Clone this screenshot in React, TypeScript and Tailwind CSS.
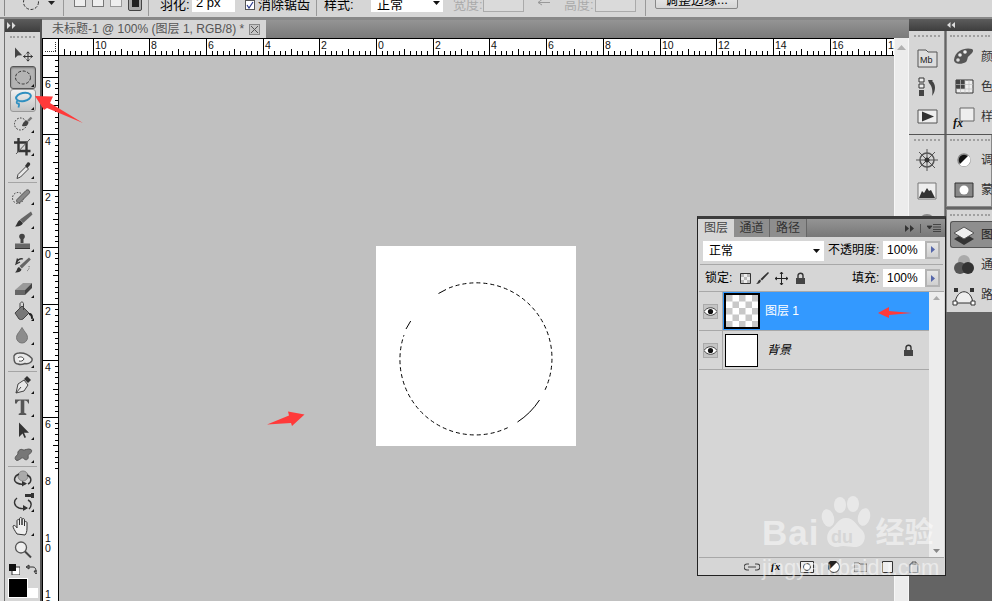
import React from "react";

const cjk = "font-['Liberation_Sans','Noto_Sans_CJK_SC',sans-serif]";

function Corner() {
  return <path d="M23 21h3v-3z" fill="#111" />;
}

const tools: Record<string, React.ReactNode> = {
  move: (
    <>
      <path d="M7 5.500v10.500l2.800-2.600 4.400-.2z" fill="#444" />
      <path d="M20 10v9M15.500 14.500h9M18.500 11.500l1.500-1.700 1.500 1.700M18.500 17.500l1.500 1.700 1.500-1.700M17.500 13l-2 1.500 2 1.500M22.500 13l2 1.500-2 1.500" stroke="#333" fill="none" />
    </>
  ),
  marquee: (
    <>
      <ellipse cx="15" cy="11.500" rx="7.500" ry="6.500" fill="none" stroke="#333" strokeDasharray="3 1.600" />
      <Corner />
    </>
  ),
  lasso: (
    <>
      <ellipse cx="15.500" cy="8" rx="7.500" ry="4" fill="none" stroke="#2f8fc0" strokeWidth="2" transform="rotate(-12 15.500 8)" />
      <path d="M9.500 12c-2 2 0 3 1.300 2.500.8 1.500 0 3-.4 4" fill="none" stroke="#2f8fc0" strokeWidth="1.800" />
      <Corner />
    </>
  ),
  quick: (
    <>
      <circle cx="12.500" cy="12" r="6" fill="none" stroke="#333" strokeDasharray="1.600 1.400" />
      <path d="M14 14c1-4 3-5.500 5-5.500l1.500 2c-.3 2.500-2.500 4.500-6.500 3.500z" fill="#444" />
      <path d="M20 9l3.500-3.500" stroke="#777" strokeWidth="2.400" />
      <Corner />
    </>
  ),
  crop: (
    <>
      <path d="M10.500 3v13h12M6 7.500h12.500v13" fill="none" stroke="#333" strokeWidth="2.400" />
      <path d="M8 19l14-15" stroke="#555" strokeWidth="1" />
      <Corner />
    </>
  ),
  dropper: (
    <>
      <path d="M10 16.500l8-8 2.500 2.500-8 8-3.500 1.500z" fill="#e8e8e8" stroke="#444" />
      <path d="M17 8l2.500-3.500c1.500-1 3.500 1 2.500 2.500L19.500 10z" fill="#333" />
      <Corner />
    </>
  ),
  heal: (
    <>
      <circle cx="10" cy="14" r="5.500" fill="none" stroke="#333" strokeDasharray="1.500 1.500" />
      <path d="M9 15.500l9-9c2-2 5 1 3 3l-9 9c-2 1-4.500-1-3-3z" fill="#888" stroke="#555" />
      <Corner />
    </>
  ),
  brush: (
    <>
      <path d="M7 18.500c4 .5 7-1 8-3.500l-3-3c-3 1-2.500 4.500-5 6.500z" fill="#333" />
      <path d="M12 11.500l3.200 3.500L24.500 6.500 23 3.500z" fill="#666" />
      <Corner />
    </>
  ),
  stamp: (
    <>
      <circle cx="14" cy="5.500" r="2.800" fill="#444" />
      <path d="M12.500 7h3v5h-3z" fill="#444" />
      <path d="M7 12.500h15v4H7z" fill="#666" />
      <path d="M7 16.500h15v1.500H7z" fill="#333" />
      <Corner />
    </>
  ),
  history: (
    <>
      <path d="M7 18.500c3 .5 6-1 6.500-3l-2.500-2.500c-2.500 1-1.500 3.500-4 5.500z" fill="#333" />
      <path d="M11.500 12l2.300 2.500 9-9-1.800-2z" fill="#666" />
      <path d="M8 10c1-4 4-6 7-5M9.500 4.500l-1.500 5.500 4-2" fill="none" stroke="#333" strokeWidth="1.300" />
      <path d="M21 12c.6 2-.4 4-2 5" fill="none" stroke="#666" strokeDasharray="1.200 1.200" />
    </>
  ),
  eraser: (
    <>
      <path d="M7 13l8-7h9l-7 7z" fill="#999" />
      <path d="M7 13h10v5H7z" fill="#666" />
      <path d="M17 13l7-7v5l-7 7z" fill="#444" />
      <Corner />
    </>
  ),
  bucket: (
    <>
      <path d="M7 13l7-7 7 7-6 6c-2 1-3 .5-4 0z" fill="#777" stroke="#444" />
      <path d="M12 8V3.500c1-2 3-2 3.500 0V10" fill="none" stroke="#444" />
      <path d="M21 13c3 0 4 2 4 5 0 1.500-2 1.500-2 0 0-2-1-3-2-3z" fill="#222" />
      <Corner />
    </>
  ),
  blur: (
    <>
      <path d="M14 3.500c2 4 5.500 6.500 5.500 10a5.500 5.500 0 0 1-11 0c0-3.500 3.500-6 5.500-10z" fill="#8c8c8c" stroke="#777" />
      <Corner />
    </>
  ),
  smudge: (
    <>
      <path d="M6 11c-.8-3 2-5 5-5 6-.5 10 2 13 5.500 1 3-3 6-7 5-2.500 1-4.500 1.500-7 .5-3 0-4-3-4-6z" fill="#e8e8e8" stroke="#555" strokeWidth="1.400" />
      <path d="M10 11c2-2 5-1 6 1-1 2-3 2.500-5 2" fill="#fff" stroke="#444" />
      <Corner />
    </>
  ),
  pen: (
    <>
      <path d="M8 20l2-9 6-4 4 5-4 6z" fill="#e8e8e8" stroke="#444" />
      <path d="M8 20l5-6" stroke="#444" />
      <path d="M16 6l3-3 4 4-3 3z" fill="#333" />
      <Corner />
    </>
  ),
  type: (
    <>
      <path d="M7 3.500h14v4h-.8c-.5-2-1.500-3-3.900-3v12.300l2 .9V19h-7.600v-1.300l2-.9V4.500c-2.400 0-3.400 1-3.900 3H7z" fill="#555" />
      <Corner />
    </>
  ),
  path: (
    <>
      <path d="M11 3.500V18l3.500-3.500 2 4.500 1.500-.7-2-4.500H21z" fill="#333" />
      <Corner />
    </>
  ),
  shape: (
    <>
      <path d="M8 18c-2-2 0-4 2-6-1-3 3-6 5-4 2 .5 5-2 8-.5 2 2-1 4-3 6 1 3-1 5-3 4-2-2-3-2-4-1-2 1.500-4 2.500-5 1.500z" fill="#777" stroke="#555" />
      <Corner />
    </>
  ),
  rot3d: (
    <>
      <circle cx="15" cy="8" r="5" fill="#aaa" stroke="#888" />
      <path d="M11 6C6 8 5 13 9 15c3 1.500 6 1.500 8.500.5M19 7c5 2 5 7 1 9" fill="none" stroke="#333" strokeWidth="1.400" />
      <path d="M14 13l5 2.500-5 3z" fill="#333" />
      <Corner />
    </>
  ),
  orbit3d: (
    <>
      <path d="M9 7c-4 3-3 8 2 10 3 1 5 1 8 0M20 9c4 2 4 6 1 9" fill="none" stroke="#333" strokeWidth="1.400" />
      <path d="M15 14l5 3-5 3z" fill="#333" />
      <path d="M17 3h6v3h-6zM23 2h3v5h-3z" fill="#333" />
      <Corner />
    </>
  ),
  hand: (
    <>
      <path d="M9 19c-2-3-4-6-4-8 1-1.500 3 0 4 2V6c0-2 2.500-2 2.500 0v4V4c0-2 2.500-2 2.500 0v6-5c0-2 2.500-2 2.500 0v6-3c0-2 2.500-2 2.500 0v5c0 4-1 6-2 7z" fill="#eee" stroke="#333" />
      <Corner />
    </>
  ),
  zoom: (
    <>
      <circle cx="13" cy="9.500" r="5.500" fill="#efefef" stroke="#555" strokeWidth="1.300" />
      <path d="M17 13.500l6 6" stroke="#444" strokeWidth="2" />
    </>
  ),
};

function Tool({ name, variant }: { name: string; variant?: "dark" | "light" }) {
  const box =
    variant === "dark"
      ? "bg-[#b4b4b4] border border-[#555] rounded-[3px] shadow-[inset_0_1px_2px_#777]"
      : variant === "light"
        ? "bg-gradient-to-b from-[#f0f0f0] to-[#c4c4c4] border border-[#999] rounded-[3px]"
        : "";
  return (
    <div className="h-[23.2px] flex items-center justify-center">
      <div className={`w-[26px] h-[23px] flex items-center justify-center shrink-0 ${box}`}>
        <svg width="30" height="23" viewBox="0 0 30 23" className="shrink-0">
          {tools[name]}
        </svg>
      </div>
    </div>
  );
}

function Sep() {
  return (
    <div className="h-[2.800px] flex items-center px-[3px]">
      <div className="h-px w-full bg-[#a5a5a5]" />
    </div>
  );
}

function Grip({ className = "" }: { className?: string }) {
  return <div className={`h-[2px] border-t-2 border-dotted border-[#a0a0a0] ${className}`} />;
}

function Toolbar() {
  return (
    <div className="w-[42px] shrink-0 flex bg-[#d6d6d6]">
      <div className="w-[5px] shrink-0 bg-[#dadada] border-r border-[#707070]" />
      <div className="flex-1 border-r-2 border-[#555] flex flex-col relative">
        <div className="h-[13px] shrink-0 bg-gradient-to-b from-[#5c5c5c] to-[#3e3e3e] flex items-center pl-[2px] text-[#ddd]">
          <svg width="9" height="7" viewBox="0 0 9 7"><path d="M0 0l3.500 3.500L0 7zM5 0l3.500 3.500L5 7z" fill="#ddd" /></svg>
        </div>
        <div className="h-[10.400px] shrink-0 flex items-center px-[5px]">
          <Grip className="w-full" />
        </div>
        <Tool name="move" />
        <Tool name="marquee" variant="dark" />
        <Tool name="lasso" variant="light" />
        <Tool name="quick" />
        <Tool name="crop" />
        <Tool name="dropper" />
        <Sep />
        <Tool name="heal" />
        <Tool name="brush" />
        <Tool name="stamp" />
        <Tool name="history" />
        <Tool name="eraser" />
        <Tool name="bucket" />
        <Tool name="blur" />
        <Tool name="smudge" />
        <Sep />
        <Tool name="pen" />
        <Tool name="type" />
        <Tool name="path" />
        <Tool name="shape" />
        <Sep />
        <Tool name="rot3d" />
        <Tool name="orbit3d" />
        <Tool name="hand" />
        <Tool name="zoom" />
        <div className="flex items-center gap-[6px] pl-[4px] h-[16px] mt-[1px] shrink-0">
          <svg width="11" height="11" viewBox="0 0 11 11"><path d="M3 3h8v8H3z" fill="#fff" stroke="#333" /><path d="M0 0h7v7H0z" fill="#111" /></svg>
          <svg width="11" height="11" viewBox="0 0 11 11"><path d="M1 3h6c2 0 3 1.500 3 5M0 3l3-2v4zM10 10L8 7h4z" fill="none" stroke="#333" /></svg>
        </div>
        <div className="flex items-end pl-[3px]">
          <div className="w-[20px] h-[20px] bg-black border border-white shrink-0" />
          <div className="w-[10px] h-[10px] bg-white shrink-0" />
        </div>
      </div>
    </div>
  );
}

function HRuler() {
  const ticks: React.ReactNode[] = [];
  for (let i = 0; i < 150; i++) {
    const x = 376 - 42 - 56.7 * 5 - 5.67 * 5 + i * 5.67;
    if (x < 17 || x > 851) continue;
    const x0 = Math.round(x) + 0.5;
    const major = (i - 5) % 10 === 0;
    const mid = i % 10 === 0;
    ticks.push(<path key={i} d={`M${x0} ${major ? 0 : mid ? 11 : 13}V17`} stroke="#000" fill="none" />);
  }
  const labels = [10, 8, 6, 4, 2, 0, 2, 4, 6, 8, 10, 12, 14, 16, 18];
  return (
    <div className="h-[18px] shrink-0 bg-white">
      <svg width="852" height="18" viewBox="0 0 852 18" className="block">
        <path d="M0 .5H852M0 17.500H852M.5 0V18" stroke="#000" fill="none" />
        <path d="M16.500 0V18" stroke="#000" fill="none" />
        <path d="M3 13.500h12M13.500 4v9" stroke="#333" strokeDasharray="1 1" fill="none" />
        {ticks}
        {labels.map((l, k) => (
          <text key={k} x={Math.round(376 - 42 - 283.5 + k * 56.7) + 2} y="11" fontSize="10.500" fontFamily="Liberation Sans" fill="#111">
            {l}
          </text>
        ))}
      </svg>
    </div>
  );
}

function VRuler() {
  const ticks: React.ReactNode[] = [];
  for (let i = -6; i < 70; i++) {
    const y = 246 - 55 - 56.7 * 3 + i * 5.67;
    if (y < 0 || y > 546) continue;
    const y0 = Math.round(y) + 0.5;
    const major = ((i % 10) + 10) % 10 === 0;
    const mid = ((i % 10) + 10) % 10 === 5;
    ticks.push(<path key={i} d={`M${major ? 0 : mid ? 11 : 13} ${y0}H17`} stroke="#000" fill="none" />);
  }
  const labels = ["6", "4", "2", "0", "2", "4", "6", "8", "10", "12"];
  return (
    <div className="w-[17px] shrink-0 bg-white">
      <svg width="17" height="546" viewBox="0 0 17 546" className="block">
        <path d="M.5 0V546M16.500 0V546" stroke="#000" fill="none" />
        {ticks}
        {labels.map((l, k) => {
          const y = Math.round(246 - 55 - 56.7 * 3 + k * 56.7);
          return (
            <text key={k} x="3" y={y + 11} fontSize="10.500" fontFamily="Liberation Sans" fill="#111">
              {l[0]}
              {l[1] ? <tspan x="3" dy="10">{l[1]}</tspan> : null}
            </text>
          );
        })}
      </svg>
    </div>
  );
}

function Selection() {
  return (
    <svg width="200" height="200" viewBox="0 0 200 200" className="block">
      <g fill="none" stroke="#000" strokeWidth="1">
        <path d="M62.500 47.500L70 43.500M30 83L34.700 75M163.500 154A75.500 75.500 0 0 1 141.500 176" />
        <path d="M73 42A75.500 75.500 0 0 1 169 144" strokeDasharray="4 3" />
        <path d="M131.700 181.700A75.500 75.500 0 0 1 28 89" strokeDasharray="4 3" />
      </g>
    </svg>
  );
}

function Scrollbar() {
  return (
    <div className="w-[15px] shrink-0 bg-[#ececec] border-x border-[#f6f6f6] flex justify-center pt-[7px]">
      <svg width="9" height="5" viewBox="0 0 9 5"><path d="M0 5L4.500 0 9 5z" fill="#b0b0b0" /></svg>
    </div>
  );
}

function Center() {
  return (
    <div className="flex-1 min-w-0 flex flex-col">
      <div className="h-[19px] shrink-0 flex bg-gradient-to-b from-[#949494] to-[#7a7a7a] border-t border-[#888]">
        <div className={`w-[224px] h-[18px] bg-[#d6d6d6] flex items-center pl-[10px] text-[12px] text-[#555] whitespace-nowrap ${cjk}`}>
          <span className="w-[197px] shrink-0">未标题-1 @ 100% (图层 1, RGB/8) *</span>
          <span className="w-[11px] h-[11px] shrink-0 bg-[#c4c4c4] border border-[#888] flex items-center justify-center">
            <svg width="7" height="7" viewBox="0 0 7 7"><path d="M0 0l7 7M7 0L0 7" stroke="#555" /></svg>
          </span>
        </div>
      </div>
      <div className="flex-1 flex min-h-0">
        <div className="w-[852px] shrink-0 flex flex-col">
          <HRuler />
          <div className="flex-1 flex min-h-0">
            <VRuler />
            <div className="flex-1 bg-[#c0c0c0] overflow-hidden">
              <div className="ml-[317px] mt-[190px] w-[200px] h-[200px] bg-white">
                <Selection />
              </div>
            </div>
          </div>
        </div>
        <Scrollbar />
      </div>
    </div>
  );
}

const dockIcons: Record<string, React.ReactNode> = {
  mb: (<><path d="M3 5h8l2 2h9v15H3z" fill="#ddd" stroke="#555" /><text x="5" y="18" fontSize="9" fontFamily="Liberation Sans" fill="#222">Mb</text></>),
  hist: (<><path d="M4 3h5v4H4zM4 9h5v4H4z" fill="#eee" stroke="#333" /><path d="M4 15h5v6H4z" fill="#444" /><path d="M13 5h5l-1 1c4 3 4 10 0 15 1-5 0-10-3-13z" fill="#444" /></>),
  play: (<><path d="M3 5h19v13H3z" fill="#eee" stroke="#555" /><path d="M7 6.500l12 5-12 5z" fill="#333" /></>),
  wheel: (<><circle cx="12" cy="12" r="7" fill="none" stroke="#555" strokeWidth="1.500" /><path d="M12 1v22M1 12h22M4 4l16 16M20 4L4 20" stroke="#555" /><circle cx="12" cy="12" r="2.500" fill="#333" /></>),
  histo: (<><path d="M3 5h18v16H3z" fill="#eee" stroke="#777" /><path d="M4 20l3-7 2 2 3-5 2 3 2-1 4 8z" fill="#333" /></>),
  ball: (<><circle cx="12" cy="14" r="8" fill="#888" /><circle cx="10" cy="11" r="3" fill="#ddd" /></>),
  palette: (<><path d="M2 15C3 5 14 2 20 4c3 2-1 5-3 7-2 1-1 4-3 6-5 3-12 2-12-2z" fill="#555" /><circle cx="8" cy="10" r="1.800" fill="#eee" /><circle cx="13" cy="7" r="1.800" fill="#eee" /><circle cx="6" cy="15" r="1.800" fill="#ddd" /></>),
  grid: (<><path d="M4 5h17v13H4z" fill="#eee" stroke="#333" /><path d="M4 5h9v9H4z" fill="#444" /><path d="M8.500 5v13M13 5v13M17 5v13M4 9.500h17M4 14h17" stroke="#bbb" strokeWidth=".7" /></>),
  fx: (<><path d="M8 3h14v13H8z" fill="#eee" stroke="#666" /><text x="1" y="22" fontSize="12" fontStyle="italic" fontWeight="bold" fontFamily="Liberation Serif" fill="#111">fx</text></>),
  adj: (<><circle cx="12" cy="12" r="6" fill="#111" stroke="#888" strokeWidth="1.500" /><path d="M7.500 16.500l9-9a6 6 0 0 1-9 9z" fill="#fff" /></>),
  mask: (<><path d="M3 5h18v14H3z" fill="#888" stroke="#333" /><circle cx="12" cy="12" r="4.500" fill="#fff" /></>),
  layers: (<><path d="M12 10l10 6-10 6-10-6z" fill="#333" /><path d="M12 4l10 6-10 6-10-6z" fill="#eee" stroke="#555" /></>),
  chan: (<><circle cx="12" cy="8" r="6" fill="#aaa" /><circle cx="8" cy="15" r="6" fill="#555" /><circle cx="16" cy="15" r="6" fill="#333" /></>),
  route: (<><path d="M3 20C5 5 19 5 21 20z" fill="#eee" stroke="#333" /><path d="M2 5h4v4H2zM18 5h4v4h-4z" fill="#333" /><path d="M1 18h4v4H1zM19 18h4v4h-4z" fill="#fff" stroke="#333" /></>),
};

function DIcon({ name }: { name: string }) {
  return (
    <svg width="24" height="24" viewBox="0 0 24 24" className="shrink-0">
      {dockIcons[name]}
    </svg>
  );
}

function DRow({ icon, label }: { icon: string; label: string }) {
  return (
    <div className="h-[30px] pl-[5px] flex items-center gap-[5px] whitespace-nowrap">
      <DIcon name={icon} />
      <span className={`text-[12px] text-[#333] ${cjk}`}>{label}</span>
    </div>
  );
}

function DCol1Icon({ name }: { name: string }) {
  return (
    <div className="h-[30px] flex items-center justify-center">
      <DIcon name={name} />
    </div>
  );
}

function Dock() {
  return (
    <div className="w-[83px] shrink-0 flex flex-col bg-[#646464] overflow-hidden">
      <div className="h-[12px] shrink-0 bg-gradient-to-b from-[#5c5c5c] to-[#3e3e3e] flex items-center justify-center">
        <svg width="8" height="6" viewBox="0 0 8 6"><path d="M3.500 0L0 3l3.500 3zM8 0L4.500 3 8 6z" fill="#ddd" /></svg>
      </div>
      <div className="flex h-[104px] shrink-0 border-b border-[#555]">
        <div className="w-[36px] shrink-0 mr-px bg-[#d6d6d6] border-r border-[#888] flex flex-col pt-[4px]">
          <Grip className="w-[26px] mx-auto mb-[5px]" />
          <DCol1Icon name="mb" />
          <DCol1Icon name="hist" />
          <DCol1Icon name="play" />
        </div>
        <div className="flex-1 min-w-0 overflow-hidden bg-[#d6d6d6] border-l border-[#888] pt-[4px]">
          <Grip className="w-[40px] ml-[3px] mb-[5px]" />
          <DRow icon="palette" label="颜色" />
          <DRow icon="grid" label="色板" />
          <DRow icon="fx" label="样式" />
        </div>
      </div>
      <div className="flex h-[177px] shrink-0">
        <div className="w-[36px] shrink-0 mr-px bg-[#d6d6d6] border-r border-[#888] flex flex-col pt-[4px]">
          <Grip className="w-[26px] mx-auto mb-[4px]" />
          <DCol1Icon name="wheel" />
          <DCol1Icon name="histo" />
          <DCol1Icon name="ball" />
        </div>
        <div className="flex-1 min-w-0 overflow-hidden flex flex-col gap-[2px]">
          <div className="h-[72px] shrink-0 bg-[#d6d6d6] border-x border-[#888] border-b pt-[4px]">
            <Grip className="w-[40px] ml-[3px] mb-[4px]" />
            <DRow icon="adj" label="调整" />
            <DRow icon="mask" label="蒙版" />
          </div>
          <div className="flex-1 bg-[#d6d6d6] border-l border-t border-[#888] pt-[4px]">
            <Grip className="w-[40px] ml-[3px] mb-[5px]" />
            <div className="ml-[3px] h-[27px] pl-[1px] flex items-center gap-[5px] bg-[#8e8e8e] border-y border-l border-[#555] rounded-l-[3px] whitespace-nowrap">
              <DIcon name="layers" />
              <span className={`text-[12px] text-[#222] ${cjk}`}>图层</span>
            </div>
            <div className="mt-[2px]"><DRow icon="chan" label="通道" /></div>
            <DRow icon="route" label="路径" />
          </div>
        </div>
      </div>
    </div>
  );
}

function Stepper({ value }: { value: string }) {
  return (
    <div className="flex h-[18px] w-[57px] shrink-0">
      <div className="w-[42px] bg-white flex items-center pl-[4px] text-[12px] text-black font-['Liberation_Sans',sans-serif]">{value}</div>
      <div className="w-[15px] bg-gradient-to-b from-[#e6e6e6] to-[#d0d0d0] border-2 border-[#b4b4b4] flex items-center justify-center">
        <svg width="4" height="7" viewBox="0 0 4 7"><path d="M0 0l4 3.500L0 7z" fill="#5566aa" /></svg>
      </div>
    </div>
  );
}

function Eye() {
  return (
    <div className="w-[15px] h-[15px] bg-[#c4c4c4] border border-[#aaa] flex items-center justify-center">
      <svg width="13" height="9" viewBox="0 0 13 9">
        <path d="M0 4.500C3-.5 10-.5 13 4.500 10 9.500 3 9.500 0 4.500z" fill="#fff" stroke="#222" strokeWidth=".8" />
        <circle cx="6.500" cy="4.500" r="2.600" fill="#111" />
      </svg>
    </div>
  );
}

function LockIcon() {
  return (
    <svg width="11" height="12" viewBox="0 0 11 12">
      <path d="M3 6V3.500c0-3 5-3 5 0V6" fill="none" stroke="#333" strokeWidth="1.400" />
      <path d="M1 6h9v6H1z" fill="#444" />
    </svg>
  );
}

function LayersPanel() {
  return (
    <div className={`absolute left-[697px] top-[216px] w-[249px] h-[360px] bg-[#d6d6d6] border-x border-b border-[#222] border-t-[3px] border-t-[#3c3c3c] flex flex-col text-[12px] text-black ${cjk}`}>
      <div className="h-[18px] shrink-0 flex bg-gradient-to-b from-[#949494] to-[#787878]">
        <div className="w-[36px] bg-[#d6d6d6] flex items-center justify-center text-[#444]">图层</div>
        <div className="w-[36px] bg-[#8e8e8e] border-r border-[#666] flex items-center justify-center text-[#333]">通道</div>
        <div className="w-[37px] bg-[#8e8e8e] border-r border-[#666] flex items-center justify-center text-[#333]">路径</div>
        <div className="flex-1 flex items-center justify-end gap-[6px] pr-[4px]">
          <svg width="9" height="7" viewBox="0 0 9 7"><path d="M0 0l4 3.500L0 7zM5 0l4 3.500L5 7z" fill="#333" /></svg>
          <div className="w-px h-[9px] bg-[#555]" />
          <svg width="14" height="8" viewBox="0 0 14 8"><path d="M0 2h5L2.500 5zM6 .5h8M6 3h8M6 5.500h8M6 7.500h8" fill="#333" stroke="#333" strokeWidth=".8" /></svg>
        </div>
      </div>
      <div className="h-[26px] shrink-0 flex items-center pl-[5px] pb-[1px]">
        <div className="w-[121px] h-[20px] shrink-0 bg-white flex items-center justify-between pl-[6px] pr-[4px] mt-[3px]">
          <span>正常</span>
          <svg width="7" height="4" viewBox="0 0 7 4"><path d="M0 0h7L3.500 4z" fill="#111" /></svg>
        </div>
        <span className="ml-[4px] w-[55px] shrink-0 whitespace-nowrap">不透明度:</span>
        <Stepper value="100%" />
      </div>
      <div className="h-[27px] shrink-0 flex items-center pl-[5px] border-t border-[#a8a8a8] mx-[2px] mt-[1px]">
        <span className="w-[35px] shrink-0 whitespace-nowrap">锁定:</span>
        <svg width="11" height="11" viewBox="0 0 11 11"><path d="M.5.5h10v10H.5z" fill="#eee" stroke="#333" /><path d="M1 1h3v3H1zM7 1h3v3H7zM4 4h3v3H4zM1 7h3v3H1zM7 7h3v3H7z" fill="#bbb" /></svg>
        <svg className="ml-[5px]" width="13" height="12" viewBox="0 0 13 12"><path d="M0 12c3 0 4-1 5-3L4 7.500C2 8 2 11 0 12zM4.500 7L6 8.500 13 1l-1-1z" fill="#333" /></svg>
        <svg className="ml-[6px]" width="13" height="13" viewBox="0 0 13 13"><path d="M6.500 0v13M0 6.500h13M5 2l1.500-2L8 2M5 11l1.500 2L8 11M2 5L0 6.500 2 8M11 5l2 1.500L11 8" stroke="#222" fill="none" /></svg>
        <span className="ml-[7px]"><LockIcon /></span>
        <span className="ml-auto w-[31px] shrink-0 whitespace-nowrap">填充:</span>
        <span className="mr-[3px]"><Stepper value="100%" /></span>
      </div>
      <div className="flex-1 flex min-h-0 border-t border-[#a8a8a8] mx-px">
        <div className="flex-1 flex flex-col min-w-0">
          <div className="h-[39px] shrink-0 flex border-b border-[#a8a8a8]">
            <div className="w-[24px] shrink-0 flex items-center justify-center border-r border-[#a8a8a8]"><Eye /></div>
            <div className="flex-1 bg-[#3399ff] flex items-center text-white">
              <div className="ml-[1px] w-[36px] h-[36px] border-2 border-black bg-white shrink-0">
                <svg width="32" height="32" viewBox="0 0 32 32" className="block">
                  <defs>
                    <pattern id="chk" width="13" height="13" patternUnits="userSpaceOnUse">
                      <path d="M0 0h6.500v6.500H0zM6.500 6.500H13V13H6.500z" fill="#c8c8c8" />
                    </pattern>
                  </defs>
                  <rect width="32" height="32" fill="url(#chk)" />
                </svg>
              </div>
              <span className="ml-[5px]">图层 1</span>
            </div>
          </div>
          <div className="h-[39px] shrink-0 flex border-b border-[#a8a8a8]">
            <div className="w-[24px] shrink-0 flex items-center justify-center border-r border-[#a8a8a8]"><Eye /></div>
            <div className="flex-1 flex items-center">
              <div className="ml-[2px] w-[33px] h-[33px] border border-black bg-white shrink-0" />
              <span className="ml-[9px] italic">背景</span>
              <span className="ml-auto mr-[15px]"><LockIcon /></span>
            </div>
          </div>
        </div>
        <div className="w-[15px] shrink-0 bg-[#ececec] flex flex-col items-center justify-between py-[4px]">
          <svg width="7" height="4" viewBox="0 0 7 4"><path d="M0 4l3.500-4L7 4z" fill="#aaa" /></svg>
          <svg width="7" height="4" viewBox="0 0 7 4"><path d="M0 0h7L3.500 4z" fill="#888" /></svg>
        </div>
      </div>
      <div className="h-[18px] shrink-0 border-t border-[#a8a8a8] mx-px flex items-center pl-[45px]">
        <svg width="16" height="8" viewBox="0 0 16 8" className="shrink-0"><path d="M5 1H3a3 3 0 0 0 0 6h2M11 1h2a3 3 0 0 1 0 6h-2M4 4h8" fill="none" stroke="#444" strokeWidth="1.200" /></svg>
        <span className="ml-[11px] w-[12px] shrink-0 text-[11px] italic font-['Liberation_Serif',serif] font-bold">fx</span>
        <svg className="ml-[17px] shrink-0" width="14" height="12" viewBox="0 0 14 12"><path d="M.5.5h13v11H.5z" fill="#eee" stroke="#333" /><circle cx="7" cy="6" r="3.500" fill="#fff" stroke="#333" /></svg>
        <svg className="ml-[14px] shrink-0" width="12" height="12" viewBox="0 0 12 12"><circle cx="6" cy="6" r="5.500" fill="#fff" stroke="#333" /><path d="M1 9L9 1a5.500 5.500 0 0 0-8 8z" fill="#222" /></svg>
        <svg className="ml-[14px] shrink-0" width="13" height="11" viewBox="0 0 13 11"><path d="M0 2h5l1 1h7v8H0z" fill="#ccc" stroke="#555" strokeWidth=".8" /></svg>
        <svg className="ml-[15px] shrink-0" width="11" height="12" viewBox="0 0 11 12"><path d="M.5.5h10v11H.5z" fill="#eee" stroke="#333" /></svg>
        <svg className="ml-[16px] shrink-0" width="10" height="12" viewBox="0 0 10 12"><path d="M1 3h8v9H1zM3 1h4v2H3z" fill="#ddd" stroke="#333" strokeWidth=".8" /></svg>
      </div>
    </div>
  );
}

function Watermark() {
  return (
    <div className="absolute left-[762px] top-[495px] w-[190px] h-[85px] pointer-events-none text-white/50 font-['Liberation_Sans',sans-serif]">
      <div className="flex items-end h-[56px]">
        <span className="text-[35px] leading-[36px] font-bold tracking-[1px]">Bai</span>
        <svg width="54" height="55" viewBox="0 0 54 55" className="shrink-0">
          <g fill="#fff" fillOpacity=".45">
            <ellipse cx="9" cy="22" rx="6" ry="9" transform="rotate(-15 9 22)" />
            <ellipse cx="21" cy="9" rx="6" ry="8" />
            <ellipse cx="34" cy="8" rx="6" ry="8" />
            <ellipse cx="45" cy="21" rx="6" ry="9" transform="rotate(15 45 21)" />
            <path d="M27 22c8 0 11 8 16 12 6 6 2 18-8 17-5 0-11-2-16 0-10 1-14-10-8-17 6-4 8-12 16-12z" />
          </g>
          <text x="12" y="47" fontSize="18" fontWeight="bold" fontFamily="Liberation Sans" fill="#d6d6d6">du</text>
        </svg>
        <span className={`ml-[2px] text-[29px] leading-[36px] font-bold whitespace-nowrap ${cjk}`}>经验</span>
      </div>
      <div className="mt-[5px] text-[22px] leading-[24px] whitespace-nowrap">jingyan.baidu.com</div>
    </div>
  );
}

function OptionsBar() {
  const text = `text-[13px] text-black whitespace-nowrap ${cjk}`;
  const label = `mt-[4px] ${text}`;
  const grey = `mt-[4px] text-[13px] text-[#aaa] whitespace-nowrap ${cjk}`;
  return (
    <div className="h-[19px] shrink-0 bg-[#d6d6d6] border-b-2 border-[#888] overflow-hidden">
      <div className="-mt-[10px] h-[26px] flex items-center">
        <div className="w-[5px] h-full shrink-0 border-r border-[#888]" />
        <svg className="ml-[15px] shrink-0" width="40" height="18" viewBox="0 0 40 18">
          <circle cx="11" cy="8" r="7.500" fill="none" stroke="#333" strokeDasharray="3 1.600" />
          <path d="M28 7h7l-3.500 4z" fill="#222" />
        </svg>
        <div className="ml-[3px] w-px h-full bg-[#999] shrink-0" />
        <div className="ml-[10px] flex gap-[6px] shrink-0">
          <div className="w-[12px] h-[12px] bg-[#eee] border border-[#777]" />
          <div className="w-[12px] h-[12px] bg-[#eee] border border-[#777]" />
          <div className="w-[12px] h-[12px] bg-[#eee] border border-[#999]" />
          <div className="w-[14px] h-[16px] bg-[#aaa] border border-[#444] rounded-[2px] flex items-center justify-center">
            <div className="w-[7px] h-[7px] bg-[#222]" />
          </div>
        </div>
        <div className="ml-[6px] w-px h-full bg-[#999] shrink-0" />
        <span className={`ml-[11px] w-[32px] shrink-0 ${label}`}>羽化:</span>
        <div className="w-[43px] h-[18px] bg-white shrink-0 flex items-center pl-[4px] text-[13px] text-black font-['Liberation_Sans',sans-serif]">2 px</div>
        <div className="ml-[10px] mt-[4px] w-[10px] h-[10px] bg-white border border-[#555] shrink-0 flex items-center justify-center">
          <svg width="8" height="8" viewBox="0 0 8 8"><path d="M1 4l2 3 4-6" fill="none" stroke="#2a3a8a" strokeWidth="1.200" /></svg>
        </div>
        <span className={`ml-[3px] w-[58px] shrink-0 ${label}`}>消除锯齿</span>
        <div className="w-px h-full bg-[#999] shrink-0" />
        <span className={`ml-[7px] w-[47px] shrink-0 ${label}`}>样式:</span>
        <div className="w-[72px] h-[18px] bg-white shrink-0 flex items-center justify-between pl-[6px] pr-[3px]">
          <span className={label}>正常</span>
          <svg width="7" height="4" viewBox="0 0 7 4"><path d="M0 0h7L3.500 4z" fill="#111" /></svg>
        </div>
        <span className={`ml-[10px] w-[30px] shrink-0 ${grey}`}>宽度:</span>
        <div className="w-[41px] h-[18px] border border-[#aaa] bg-[#dadada] shrink-0" />
        <svg className="ml-[14px] shrink-0" width="12" height="8" viewBox="0 0 12 8"><path d="M0 3.500h12M4 .5L0 3.500 4 6" fill="none" stroke="#999" /></svg>
        <span className={`ml-[14px] w-[31px] shrink-0 ${grey}`}>高度:</span>
        <div className="w-[41px] h-[18px] border border-[#aaa] bg-[#dadada] shrink-0" />
        <div className="ml-[9px] w-px h-full bg-[#999] shrink-0" />
        <div className={`ml-[9px] -mt-[6px] w-[83px] h-[18px] bg-gradient-to-b from-[#f0f0f0] to-[#d6d6d6] border border-[#888] rounded-[2px] shrink-0 flex items-center justify-center ${text}`}>调整边缘...</div>
      </div>
    </div>
  );
}

export default function App() {
  return (
    <div className="relative w-[992px] h-[601px] overflow-hidden flex flex-col bg-[#d6d6d6]">
      <OptionsBar />
      <div className="flex-1 flex min-h-0">
        <Toolbar />
        <Center />
        <Dock />
      </div>
      <LayersPanel />
      <svg className="absolute inset-0 pointer-events-none" width="992" height="601" viewBox="0 0 992 601">
        <g fill="#ff3a3a">
          <path d="M35 96L53 96.500 50 103 83 123 47 108 44 110z" />
          <path d="M267 424.500L289 415.500 288 411.500 304.500 414.500 292 426 291 423z" />
          <path d="M878 313L889 307 889 311 912 313 889 315 889 318z" />
        </g>
      </svg>
      <Watermark />
    </div>
  );
}
